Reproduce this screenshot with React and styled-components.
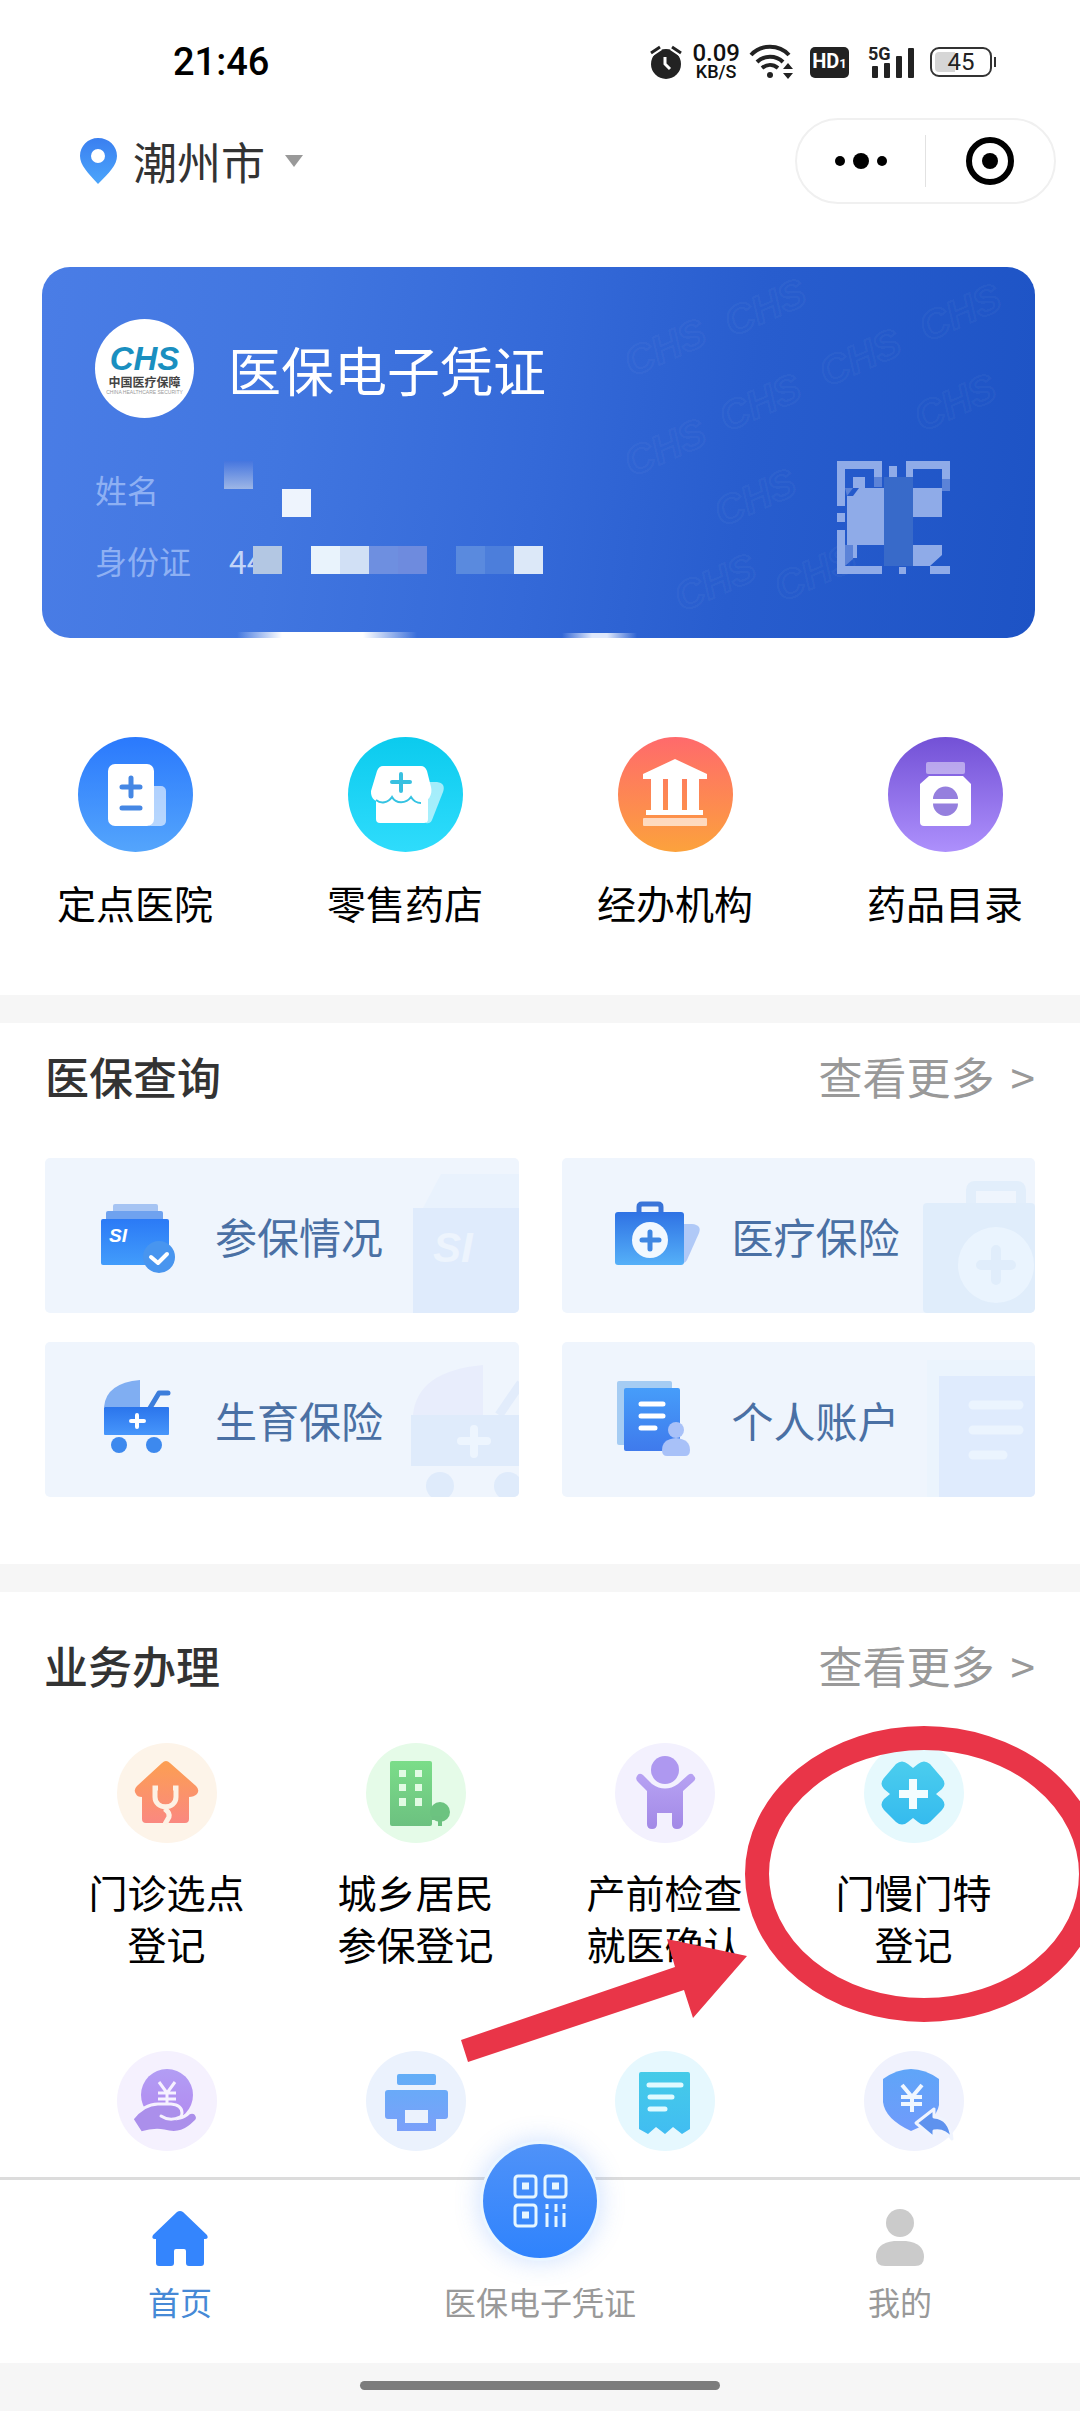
import React from 'react'
import styled, { createGlobalStyle } from 'styled-components';

const GlobalStyle = createGlobalStyle`
*{
    box-sizing:border-box;
}
body{
    margin:0;
    background:#fff;
    color:#111;
    font-family:'Noto Sans CJK SC', sans-serif;
}
button{
    border:0;
    padding:0;
    background:none;
    font:inherit;
    color:inherit;
    cursor:pointer;
}
a{
    color:inherit;
    text-decoration:none;
}
svg{
    display:block;
    flex:none;
    overflow:visible;
}
`;

const Gradient = ({ id, from, to }) => (
    <defs>
        <linearGradient id={id} x1="0" y1="0" x2="0" y2="1">
            <stop offset="0" stopColor={from} />
            <stop offset="1" stopColor={to} />
        </linearGradient>
    </defs>
)

/* status bar */

const AlarmIcon = () => (
    <svg width="32" height="34" viewBox="0 0 32 34" aria-hidden="true">
        <circle cx="15" cy="19" r="15" fill="#222" />
        <path d="M0 8l9-6M30 8l-9-6" stroke="#fff" strokeWidth="7" />
        <path d="M0 8l9-6M30 8l-9-6" stroke="#222" strokeWidth="3" />
        <path d="M14 12v7l5 5" stroke="#fff" strokeWidth="3" fill="none" />
    </svg>
)

const WifiIcon = () => (
    <svg width="46" height="34" viewBox="0 0 46 34" aria-hidden="true">
        <g fill="none" stroke="#222" strokeWidth="4">
            <path d="M2 10C12-1 30-1 40 10" />
            <path d="M8 17c7-7 19-7 26 0" />
            <path d="M13 23c5-4 11-4 16 0" />
        </g>
        <circle cx="21" cy="30" r="3" fill="#222" />
        <path d="M34 24l5-6 5 6zM34 28l5 6 5-6z" fill="#222" />
    </svg>
)

const SignalIcon = () => (
    <svg width="48" height="34" viewBox="0 0 48 34" aria-hidden="true">
        <text x="0" y="15" fontSize="18" fontWeight="700" fontFamily="Roboto, sans-serif" fill="#222">5G</text>
        <g fill="#222">
            <rect x="4" y="21" width="6" height="12" rx="1" />
            <rect x="16" y="18" width="6" height="15" rx="1" />
            <rect x="28" y="11" width="6" height="22" rx="1" />
            <rect x="40" y="3" width="6" height="30" rx="1" />
        </g>
    </svg>
)

/* round shortcuts under the card */

const HospitalIcon = () => (
    <svg width="115" height="115" viewBox="0 0 115 115" aria-hidden="true">
        <Gradient id="hospital" from="#2a79fd" to="#54a5fc" />
        <circle cx="57.5" cy="57.5" r="57.5" fill="url(#hospital)" />
        <rect x="68" y="49" width="20" height="40" rx="5" fill="#fff" opacity=".6" />
        <rect x="30" y="27" width="46" height="62" rx="7" fill="#fff" />
        <path d="M53 41v18M44 50h18M44 71h18" stroke="#4587e4" strokeWidth="5" strokeLinecap="round" />
    </svg>
)

const PharmacyIcon = () => (
    <svg width="115" height="115" viewBox="0 0 115 115" aria-hidden="true">
        <Gradient id="pharmacy" from="#0bcbee" to="#2fdcfc" />
        <circle cx="57.5" cy="57.5" r="57.5" fill="url(#pharmacy)" />
        <path d="M78 45h11q9 1 6 10L84 83q-2 4-6 3z" fill="#fff" opacity=".6" />
        <path d="M28 62h52v20q0 4-4 4H32q-4 0-4-4z" fill="#fff" />
        <path d="M35 29h38q4 0 6 5l4 16c2 8-3 15-10 16-5 0-8-2-10-5-5 7-15 7-19 0-4 7-22 7-21-7l6-20q2-5 6-5z" fill="#fff" />
        <path d="M28 63c5 4 12 3 16-3 4 7 14 7 19 0 3 5 6 6 10 6" fill="none" stroke="#35c3e2" strokeWidth="2" />
        <path d="M53 37v17M44 45h18" stroke="#38c0e0" strokeWidth="4" strokeLinecap="round" />
    </svg>
)

const AgencyIcon = () => (
    <svg width="115" height="115" viewBox="0 0 115 115" aria-hidden="true">
        <Gradient id="agency" from="#ff6a6c" to="#fca23c" />
        <circle cx="57.5" cy="57.5" r="57.5" fill="url(#agency)" />
        <path d="M57 22l32 15v5h-8v31h4v5H28v-5h5V42h-8v-5zM45 42v31h5V42zM64 42v31h5V42z" fill="#fff" fillRule="evenodd" />
        <rect x="25" y="81" width="64" height="8" rx="1" fill="#fff" opacity=".65" />
    </svg>
)

const MedicineIcon = () => (
    <svg width="115" height="115" viewBox="0 0 115 115" aria-hidden="true">
        <Gradient id="medicine" from="#7351d6" to="#ad90fc" />
        <circle cx="57.5" cy="57.5" r="57.5" fill="url(#medicine)" />
        <rect x="38" y="25" width="39" height="12" rx="2" fill="#fff" opacity=".45" />
        <path d="M41 39h34l8 8v38q0 4-4 4H36q-4 0-4-4V47z" fill="#fff" />
        <path d="M45 62a12.500 12.500 0 0 1 25 0zM45 66.500a12.500 12.500 0 0 0 25 0z" fill="#957fde" />
    </svg>
)

/* query tiles: a small icon and a pale enlarged one behind it */

const InsuredIcon = () => (
    <svg width="90" height="84" viewBox="0 0 90 84" aria-hidden="true">
        <Gradient id="insured" from="#2b7af6" to="#429cfb" />
        <rect x="18" y="10" width="45" height="10" rx="2" fill="#a6c4f3" />
        <rect x="11" y="17" width="57" height="10" rx="2" fill="#6fa2ef" />
        <rect x="6" y="25" width="68" height="46" rx="2" fill="url(#insured)" />
        <text x="14" y="48" fontSize="19" fontWeight="700" fontStyle="italic" fontFamily="'Liberation Sans', sans-serif" fill="#fff">SI</text>
        <circle cx="64" cy="63" r="16" fill="#4895ef" />
        <path d="M56 63l7 6 9-9" fill="none" stroke="#fff" strokeWidth="4" strokeLinecap="round" strokeLinejoin="round" />
    </svg>
)

const KitIcon = () => (
    <svg width="90" height="84" viewBox="0 0 90 84" aria-hidden="true">
        <Gradient id="kit" from="#2f72e4" to="#55b0f8" />
        <path d="M70 30h10q10 1 7 9L75 66q-2 4-5 3z" fill="#b0c9f7" />
        <path d="M27 20v-7q0-3 3-3h16q3 0 3 3v7" fill="none" stroke="#3a74d8" strokeWidth="5" />
        <rect x="3" y="18" width="69" height="53" rx="3" fill="url(#kit)" />
        <circle cx="38" cy="46" r="18" fill="#f1f8ff" />
        <path d="M38 38v17M30 46h17" stroke="#3f87e2" strokeWidth="5" strokeLinecap="round" />
    </svg>
)

const PramIcon = () => (
    <svg width="90" height="84" viewBox="0 0 90 84" aria-hidden="true">
        <Gradient id="pram" from="#2b75ec" to="#4796fb" />
        <path d="M9 29Q11 5 45 2v27z" fill="#80aef2" />
        <path d="M55 30l9-15h9" fill="none" stroke="#3c7ddb" strokeWidth="5" strokeLinecap="round" strokeLinejoin="round" />
        <rect x="9" y="29" width="65" height="28" rx="1" fill="url(#pram)" />
        <path d="M42 37v12M36 43h13" stroke="#fff" strokeWidth="4" strokeLinecap="round" />
        <circle cx="24" cy="67" r="8" fill="#3d89ee" />
        <circle cx="59" cy="67" r="8" fill="#3d89ee" />
    </svg>
)

const AccountIcon = () => (
    <svg width="90" height="84" viewBox="0 0 90 84" aria-hidden="true">
        <Gradient id="account" from="#469dfa" to="#3f7aec" />
        <rect x="5" y="3" width="55" height="64" rx="2" fill="#a5ccf3" />
        <rect x="12" y="10" width="56" height="63" rx="2" fill="url(#account)" />
        <path d="M29 26h22M29 38h22M29 50h14" stroke="#fff" strokeWidth="5" strokeLinecap="round" />
        <circle cx="64" cy="52" r="8" fill="#a8c1f8" />
        <path d="M50 72q0-11 14-12 14 1 14 12 0 6-5 6H55q-5 0-5-6z" fill="#a8c1f8" />
    </svg>
)

const InsuredMark = () => (
    <svg width="120" height="155" viewBox="0 0 120 155" aria-hidden="true">
        <path d="M24 50l18-34h78v34z" fill="#e9f2fd" />
        <rect x="14" y="50" width="106" height="105" fill="#dfebfc" />
        <text x="34" y="104" fontSize="42" fontWeight="700" fontStyle="italic" fontFamily="'Liberation Sans', sans-serif" fill="#edf4fd">SI</text>
    </svg>
)

const KitMark = () => (
    <svg width="120" height="155" viewBox="0 0 120 155" aria-hidden="true">
        <path d="M56 46V32q0-4 4-4h42q4 0 4 4v14" fill="none" stroke="#e2eefb" strokeWidth="10" />
        <rect x="8" y="45" width="112" height="110" rx="4" fill="#e0edfb" />
        <circle cx="81" cy="107" r="38" fill="#eaf4fe" />
        <path d="M81 92v30M66 107h30" stroke="#e0edfb" strokeWidth="10" strokeLinecap="round" />
    </svg>
)

const PramMark = () => (
    <svg width="120" height="155" viewBox="0 0 120 155" aria-hidden="true">
        <path d="M14 73q4-44 70-50v50z" fill="#e8edfc" />
        <path d="M100 73l22-32" stroke="#e2ecfb" strokeWidth="9" />
        <rect x="12" y="73" width="108" height="51" fill="#dfebfb" />
        <path d="M75 87v25M62 99h26" stroke="#edf5fe" strokeWidth="8" strokeLinecap="round" />
        <circle cx="41" cy="144" r="14" fill="#dfebfb" />
        <circle cx="109" cy="144" r="14" fill="#dfebfb" />
    </svg>
)

const AccountMark = () => (
    <svg width="120" height="155" viewBox="0 0 120 155" aria-hidden="true">
        <rect x="12" y="18" width="108" height="137" fill="#ebf4fd" />
        <rect x="24" y="34" width="96" height="121" fill="#dfebfd" />
        <path d="M58 63h46M58 88h46M58 113h30" stroke="#ebf4fe" strokeWidth="9" strokeLinecap="round" />
    </svg>
)

/* business icons */

const ClinicIcon = () => (
    <svg width="100" height="100" viewBox="0 0 100 100" aria-hidden="true">
        <Gradient id="clinic" from="#fc9f52" to="#fa8880" />
        <circle cx="50" cy="50" r="50" fill="#fdf4e9" />
        <path d="M45 20q4-4 8 0l26 23q4 4 1 8-3 3-8 3v22q0 4-4 4H29q-4 0-4-4V54q-5 0-6-3-3-4 1-8z" fill="url(#clinic)" />
        <path d="M41 45h-3v9c0 13 21 13 21 0v-9h-3M49 64v3q4 3 3 7l-4 7" fill="none" stroke="#fdf1e4" strokeWidth="5" />
    </svg>
)

const ResidentIcon = () => (
    <svg width="100" height="100" viewBox="0 0 100 100" aria-hidden="true">
        <Gradient id="resident" from="#7bdd89" to="#6cc180" />
        <circle cx="50" cy="50" r="50" fill="#e5fbe8" />
        <rect x="24" y="18" width="42" height="65" rx="2" fill="url(#resident)" />
        <circle cx="74" cy="69" r="10" fill="#6cc380" />
        <path d="M66 75h8v8M74 76v7" stroke="#6cc180" strokeWidth="4" fill="none" />
        <path d="M33 27h7v7h-7zM49 27h7v7h-7zM33 41h7v7h-7zM49 41h7v7h-7zM33 55h7v8h-7zM49 55h7v8h-7z" fill="#e2fbe4" />
    </svg>
)

const PrenatalIcon = () => (
    <svg width="100" height="100" viewBox="0 0 100 100" aria-hidden="true">
        <Gradient id="prenatal" from="#b7a2f3" to="#a289e6" />
        <circle cx="50" cy="50" r="50" fill="#f3f1fe" />
        <path d="M28 32q-4-3-6 1-2 3 1 6l9 9v33q0 5 5 5t5-5V70h15v11q0 5 5 5t6-5V48l10-9q4-3 1-6-2-4-6-1L63 41q-13 9-26 0z" fill="url(#prenatal)" />
        <circle cx="50" cy="28" r="17" fill="#f3f1fe" />
        <circle cx="50" cy="27" r="14" fill="#ae98f0" />
    </svg>
)

const ChronicIcon = () => (
    <svg width="100" height="100" viewBox="0 0 100 100" aria-hidden="true">
        <Gradient id="chronic" from="#4bcdee" to="#35bbee" />
        <circle cx="50" cy="50" r="50" fill="#e6f9fd" />
        <path d="M49 25l5-4q6-5 12 0l12 14q5 6 0 11l-6 5 6 5q5 6 0 11L66 79q-6 5-12 0l-5-4-5 4q-6 5-12 0L20 67q-5-5 0-11l6-5-6-5q-5-5 0-11l12-14q6-5 12 0z" fill="url(#chronic)" />
        <path d="M49 36v30M35 51h29" stroke="#f3fdff" strokeWidth="8" />
    </svg>
)

const SubsidyIcon = () => (
    <svg width="100" height="100" viewBox="0 0 100 100" aria-hidden="true">
        <Gradient id="subsidy" from="#b29df4" to="#b28af0" />
        <circle cx="50" cy="50" r="50" fill="#f5f1fe" />
        <circle cx="50" cy="44" r="26" fill="url(#subsidy)" />
        <path d="M42 31l8 11 8-11M41 42h18M41 48h18M50 42v12" fill="none" stroke="#f6f1ff" strokeWidth="3" />
        <path d="M15 68q12-15 26-15h13q11 1 11 9 0 3-2 5 5-1 9-5 4-2 7 1 3 4 0 7C69 80 61 84 47 80q-10-2-23 2z" fill="#ab8feb" stroke="#f5f1fe" strokeWidth="3" />
        <path d="M44 65q9 6 19 1" fill="none" stroke="#f5f1fe" strokeWidth="3" strokeLinecap="round" />
    </svg>
)

const PrintIcon = () => (
    <svg width="100" height="100" viewBox="0 0 100 100" aria-hidden="true">
        <Gradient id="print" from="#62aef7" to="#7ba0fa" />
        <circle cx="50" cy="50" r="50" fill="#ebf2fd" />
        <path d="M33 23h35q2 0 2 2v7q0 2-2 2H33q-2 0-2-2v-7q0-2 2-2zM22 39h57q3 0 3 3v23q0 3-3 3h-9v12H31V68h-9q-3 0-3-3V42q0-3 3-3zM39 59v13h23V59z" fill="url(#print)" fillRule="evenodd" />
    </svg>
)

const ReceiptIcon = () => (
    <svg width="100" height="100" viewBox="0 0 100 100" aria-hidden="true">
        <Gradient id="receipt" from="#45cbe8" to="#41bdf2" />
        <circle cx="50" cy="50" r="50" fill="#e6f8fe" />
        <path d="M26 21h47q2 0 2 2v55l-8 5-9-7-8 7-9-7-8 7-9-5V23q0-2 2-2z" fill="url(#receipt)" />
        <path d="M34 34h32M35 46h22M35 58h15" stroke="#dffaff" strokeWidth="5" strokeLinecap="round" />
    </svg>
)

const RefundIcon = () => (
    <svg width="100" height="100" viewBox="0 0 100 100" aria-hidden="true">
        <Gradient id="refund" from="#5fa5f8" to="#709bfb" />
        <circle cx="50" cy="50" r="50" fill="#f0f2fd" />
        <path d="M19 28Q47 8 75 28v26q-3 16-28 26-26-12-28-29z" fill="url(#refund)" />
        <path d="M38 34l10 12 10-12M37 46h21M37 53h21M48 46v15" fill="none" stroke="#f0f7ff" strokeWidth="4" />
        <path d="M52 72l18-14v8q16 1 18 22-8-10-18-8v7z" fill="#5e92ee" stroke="#f0f4fe" strokeWidth="3" strokeLinejoin="round" />
    </svg>
)

/* what is left of the personal code after it was masked */
const MaskedCode = () => (
    <svg width="113" height="113" viewBox="0 0 113 113" role="img" aria-label="二维码">
        <rect x="47" y="16" width="29" height="89" fill="#386ac9" />
        <g fill="#8fabe8">
            <path d="M0 0h45v16h-8V8H8v37H0zM0 69h8v36h37v8H0zM0 52h8v9H0z" />
            <path d="M16 16h12v11H16zM10 35h6l6-8h25v57H10zM16 84h4v13h-4z" />
            <path d="M52 5h8v11h-8zM69 0h44v18h-8V8H76v8h-7zM76 27h29v29H76z" />
            <path d="M76 84h29v10l-12 11H76zM93 105h20v8H93zM62 106h7v7h-7z" />
        </g>
        <path d="M37 16h8v10h-8zM8 84h8v14l-8 7zM105 18h8v12h-8zM8 27h8l-6 8z" fill="#5c83d8" />
    </svg>
)

const services = [
    { name: '定点医院', Icon: HospitalIcon },
    { name: '零售药店', Icon: PharmacyIcon },
    { name: '经办机构', Icon: AgencyIcon },
    { name: '药品目录', Icon: MedicineIcon },
]

const queries = [
    { name: '参保情况', Icon: InsuredIcon, Mark: InsuredMark },
    { name: '医疗保险', Icon: KitIcon, Mark: KitMark },
    { name: '生育保险', Icon: PramIcon, Mark: PramMark },
    { name: '个人账户', Icon: AccountIcon, Mark: AccountMark },
]

const business = [
    { lines: ['门诊选点', '登记'], Icon: ClinicIcon },
    { lines: ['城乡居民', '参保登记'], Icon: ResidentIcon },
    { lines: ['产前检查', '就医确认'], Icon: PrenatalIcon },
    { lines: ['门慢门特', '登记'], Icon: ChronicIcon },
    { Icon: SubsidyIcon },
    { Icon: PrintIcon },
    { Icon: ReceiptIcon },
    { Icon: RefundIcon },
]

const idMask = ['#b3c7e3', null, '#e9f3fc', '#d1e0f5', '#6e8fe0', '#6e8bde', null, '#5a8ade', '#4c7edb', '#dce8f8']

const watermarks = [
    [690, 70], [885, 75], [590, 110], [785, 120], [880, 165], [685, 165], [590, 210], [680, 260], [740, 335], [640, 345],
]

function StatusBar() {
    return (
        <StatusRow>
            <Clock>21:46</Clock>
            <StatusIcons>
                <AlarmIcon />
                <Speed>
                    <strong>0.09</strong>
                    <span>KB/S</span>
                </Speed>
                <WifiIcon />
                <HdBadge>HD<small>1</small></HdBadge>
                <SignalIcon />
                <Battery>45</Battery>
            </StatusIcons>
        </StatusRow>
    )
}

function TopBar() {
    return (
        <TopRow>
            <City type="button">
                <svg width="37" height="46" viewBox="0 0 37 46" aria-hidden="true">
                    <Gradient id="pin" from="#3a7ff0" to="#4ba5fb" />
                    <path d="M18 0C8 0 0 8 0 18c0 9 8 17 18 28 11-11 19-19 19-28C37 8 29 0 18 0zm0 11a7 7 0 1 1 0 14 7 7 0 0 1 0-14z" fill="url(#pin)" fillRule="evenodd" />
                </svg>
                <span>潮州市</span>
                <svg width="18" height="12" viewBox="0 0 18 12" aria-hidden="true">
                    <path d="M0 0h18l-9 12z" fill="#999" />
                </svg>
            </City>
            <Capsule>
                <button type="button" aria-label="更多">
                    <svg width="52" height="18" viewBox="0 0 52 18" aria-hidden="true">
                        <circle cx="5" cy="9" r="5" />
                        <circle cx="26" cy="9" r="8" />
                        <circle cx="47" cy="9" r="5" />
                    </svg>
                </button>
                <button type="button" aria-label="关闭">
                    <svg width="48" height="48" viewBox="0 0 48 48" aria-hidden="true">
                        <circle cx="24" cy="24" r="21" fill="none" stroke="#000" strokeWidth="6" />
                        <circle cx="24" cy="24" r="8" />
                    </svg>
                </button>
            </Capsule>
        </TopRow>
    )
}

function VoucherCard() {
    return (
        <Card>
            <CardPattern viewBox="0 0 993 371" preserveAspectRatio="xMaxYMid slice" aria-hidden="true">
                {watermarks.map(([x, y]) => (
                    <text key={`${x}-${y}`} x={x} y={y} transform={`rotate(-24 ${x} ${y})`}>CHS</text>
                ))}
            </CardPattern>
            <CardHead>
                <Logo>
                    <b>CHS</b>
                    <span>中国医疗保障</span>
                    <small>CHINA HEALTHCARE SECURITY</small>
                </Logo>
                <h1>医保电子凭证</h1>
            </CardHead>
            <CardBody>
                <Info>
                    <dt>姓名</dt>
                    <NameMask>
                        <Block $fill="linear-gradient(#4676df, #9db6e6)" />
                        <Block />
                        <Block $fill="#eef4fd" $low />
                    </NameMask>
                    <dt>身份证</dt>
                    <IdMask>
                        <span>44</span>
                        {idMask.map((fill, i) => <Block key={i} $fill={fill} />)}
                    </IdMask>
                </Info>
                <MaskedCode />
            </CardBody>
        </Card>
    )
}

function SectionHeader({ title }) {
    return (
        <Header>
            <h2>{title}</h2>
            <a href="#more">查看更多<span>&gt;</span></a>
        </Header>
    )
}

function TabBar() {
    return (
        <Tabs>
            <Tab href="#home" $active>
                <svg width="56" height="56" viewBox="0 0 56 56" aria-hidden="true">
                    <path d="M25 1q3-2 6 0l24 23q2 4-2 4h-1v24q0 3-3 3H37q-3 0-3-3V40q0-2-2-2h-8q-2 0-2 2v12q0 3-3 3H7q-3 0-3-3V28H3q-4 0-2-4z" fill="#3485fd" />
                </svg>
                首页
            </Tab>
            <Tab href="#voucher">
                <CodeButton>
                    <svg width="54" height="54" viewBox="0 0 54 54" fill="none" stroke="#e6f6ff" strokeWidth="3" aria-hidden="true">
                        <rect x="2" y="2" width="21" height="21" rx="3" />
                        <rect x="32" y="2" width="21" height="21" rx="3" />
                        <rect x="2" y="31" width="21" height="21" rx="3" />
                        <path d="M9 12h7M39 12h7M9 41h7" strokeWidth="7" />
                        <path d="M34 30v5M34 39v14M43 30v8M43 42v11M51 30v5M51 39v14" />
                    </svg>
                </CodeButton>
                医保电子凭证
            </Tab>
            <Tab href="#mine">
                <svg width="48" height="58" viewBox="0 0 48 58" fill="#cbcbcb" aria-hidden="true">
                    <circle cx="24" cy="14" r="14" />
                    <path d="M18 32h12q18 2 18 16 0 9-9 9H9q-9 0-9-9 0-14 18-16z" />
                </svg>
                我的
            </Tab>
        </Tabs>
    )
}

function App() {
    return (
        <Page>
            <GlobalStyle />
            <StatusBar />
            <TopBar />
            <VoucherCard />
            <Services>
                {services.map(({ name, Icon }) => (
                    <Service key={name} href="#service">
                        <Icon />
                        {name}
                    </Service>
                ))}
            </Services>
            <QuerySection>
                <SectionHeader title="医保查询" />
                <TileGrid>
                    {queries.map(({ name, Icon, Mark }) => (
                        <Tile key={name} href="#query">
                            <TileMark><Mark /></TileMark>
                            <Icon />
                            <span>{name}</span>
                        </Tile>
                    ))}
                </TileGrid>
            </QuerySection>
            <BusinessSection>
                <SectionHeader title="业务办理" />
                <BusinessGrid>
                    {business.map(({ lines, Icon }, i) => (
                        <BusinessItem key={i} href="#business">
                            <Icon />
                            {lines && <p>{lines[0]}<br />{lines[1]}</p>}
                        </BusinessItem>
                    ))}
                </BusinessGrid>
                <Highlight viewBox="0 0 1080 585" preserveAspectRatio="xMaxYMin meet" aria-hidden="true">
                    <ellipse cx="924" cy="282" rx="167" ry="136" fill="none" stroke="#e93548" strokeWidth="24" />
                    <path d="M461 448l214-73-8-28 80 17-54 62-9-28-216 72z" fill="#e93548" />
                </Highlight>
            </BusinessSection>
            <TabBar />
            <GestureArea><i /></GestureArea>
        </Page>
    )
}

const Page = styled.div`
display:flex;
flex-direction:column;
min-height:100vh;
overflow-x:hidden;
`;
const StatusRow = styled.div`
display:flex;
align-items:center;
justify-content:space-between;
padding:30px 83px 0 173px;
height:94px;
font-family:Roboto, sans-serif;
`;
const Clock = styled.time`
font-size:38px;
font-weight:500;
color:#000;
`;
const StatusIcons = styled.div`
display:flex;
align-items:center;
gap:9px;
`;
const Speed = styled.div`
display:flex;
flex-direction:column;
align-items:center;
color:#111;
strong{
    font-size:24px;
    line-height:20px;
    font-weight:500;
}
span{
    font-size:18px;
    line-height:18px;
    font-weight:500;
}
`;
const HdBadge = styled.span`
margin:0 10px 0 6px;
width:39px;
border-radius:5px;
background:#222;
color:#fff;
font-size:20px;
font-weight:700;
line-height:28px;
text-align:center;
small{
    font-size:13px;
}
`;
const Battery = styled.div`
position:relative;
margin:0 5px;
width:62px;
border:2px solid #333;
border-radius:9px;
background:linear-gradient(90deg, #d6d6d6 40%, #fff 40%);
background-clip:content-box;
padding:3px;
color:#222;
font-size:24px;
line-height:20px;
text-align:center;
&::after{
    content:'';
    position:absolute;
    right:-6px;
    top:8px;
    width:2px;
    height:10px;
    background:#333;
}
`;
const TopRow = styled.div`
display:flex;
align-items:center;
justify-content:space-between;
padding:24px 24px 0 80px;
`;
const City = styled.button`
display:flex;
align-items:center;
gap:16px;
font-size:44px;
line-height:52px;
color:#333;
svg:last-child{
    margin-left:4px;
}
`;
const Capsule = styled.div`
display:flex;
align-items:center;
width:261px;
height:86px;
border:2px solid #f0f0f0;
border-radius:43px;
button{
    flex:1;
    display:flex;
    align-items:center;
    justify-content:center;
    height:52px;
}
button + button{
    border-left:1px solid #e2e2e2;
}
`;
const Card = styled.section`
position:relative;
margin:63px 45px 0 42px;
padding:52px 85px 64px 53px;
border-radius:28px;
overflow:hidden;
color:#fff;
background:
    linear-gradient(90deg, transparent, #fff 25%, #fff 70%, transparent) 195px 100% / 180px 6px no-repeat,
    linear-gradient(90deg, transparent, #dfe8fb 40%, #dfe8fb 60%, transparent) 520px 100% / 75px 5px no-repeat,
    linear-gradient(97deg, #4a7de6 0%, #4176e0 25%, #3469d8 50%, #285dce 70%, #1d53c5 100%);
`;
const CardPattern = styled.svg`
position:absolute;
left:0;
top:0;
width:100%;
height:100%;
text{
    fill:none;
    stroke:#fff;
    stroke-opacity:0.05;
    stroke-width:2px;
    font:italic 700 40px 'Liberation Sans', sans-serif;
}
`;
const CardHead = styled.div`
position:relative;
display:flex;
align-items:center;
gap:34px;
h1{
    margin:0;
    font-size:53px;
    line-height:64px;
    font-weight:400;
}
`;
const Logo = styled.div`
display:flex;
flex-direction:column;
align-items:center;
justify-content:center;
width:99px;
height:99px;
border-radius:50%;
background:#fff;
white-space:nowrap;
b{
    font:italic 700 33px/32px 'Liberation Sans', sans-serif;
    color:#1a8fc0;
}
span{
    font-size:12px;
    line-height:14px;
    font-weight:700;
    color:#444;
}
small{
    font:5px/6px 'Liberation Sans', sans-serif;
    color:#999;
}
`;
const CardBody = styled.div`
position:relative;
display:flex;
justify-content:space-between;
margin-top:43px;
`;
const Info = styled.dl`
display:grid;
grid-template-columns:129px auto;
grid-template-rows:56px 28px;
row-gap:29px;
align-items:center;
margin:0;
dt{
    font-size:32px;
    line-height:28px;
    color:#8eb0f3;
}
dd{
    display:flex;
    margin:0;
}
`;
const NameMask = styled.dd`
height:56px;
`;
const IdMask = styled.dd`
span{
    width:29px;
    padding-left:5px;
    overflow:hidden;
    font-size:32px;
    line-height:28px;
    color:#c3d5f8;
}
`;
const Block = styled.i`
width:29px;
height:28px;
align-self:${({ $low }) => ($low ? 'flex-end' : 'flex-start')};
background:${({ $fill }) => $fill || 'none'};
`;
const Services = styled.nav`
display:grid;
grid-template-columns:repeat(4, 1fr);
padding:99px 0 67px;
`;
const Service = styled.a`
display:flex;
flex-direction:column;
align-items:center;
gap:24px;
font-size:39px;
line-height:52px;
color:#000;
`;
const Section = styled.section`
border-top:28px solid #f6f6f6;
`;
const QuerySection = styled(Section)`
padding:27px 45px 67px;
`;
const BusinessSection = styled(Section)`
position:relative;
padding:47px 42px 26px;
header{
    padding:0 3px 0 2px;
}
`;
const Header = styled.header`
display:flex;
align-items:center;
justify-content:space-between;
font-size:44px;
line-height:52px;
h2{
    margin:0;
    font-size:44px;
    font-weight:500;
    color:#333;
}
a{
    color:#999;
}
span{
    margin-left:16px;
}
`;
const TileGrid = styled.div`
display:grid;
grid-template-columns:1fr 1fr;
gap:29px 43px;
margin-top:56px;
`;
const Tile = styled.a`
position:relative;
display:flex;
align-items:center;
gap:30px;
height:155px;
padding-left:50px;
border-radius:5px;
overflow:hidden;
background:#eff5fd;
font-size:42px;
line-height:52px;
color:#4a70a4;
span{
    position:relative;
}
`;
const TileMark = styled.div`
position:absolute;
right:0;
top:0;
`;
const BusinessGrid = styled.div`
display:grid;
grid-template-columns:repeat(4, 1fr);
row-gap:82px;
margin-top:52px;
`;
const BusinessItem = styled.a`
display:flex;
flex-direction:column;
align-items:center;
gap:22px;
font-size:39px;
line-height:52px;
text-align:center;
color:#000;
p{
    margin:0;
}
`;
const Highlight = styled.svg`
position:absolute;
left:0;
top:0;
width:100%;
height:100%;
pointer-events:none;
`;
const Tabs = styled.nav`
position:relative;
display:grid;
grid-template-columns:repeat(3, 1fr);
align-items:end;
margin-top:auto;
padding-bottom:42px;
border-top:3px solid #dcdcdc;
background:#fff;
`;
const Tab = styled.a`
display:flex;
flex-direction:column;
align-items:center;
gap:14px;
font-size:32px;
line-height:40px;
color:${({ $active }) => ($active ? '#4689d6' : '#999')};
`;
const CodeButton = styled.span`
display:flex;
align-items:center;
justify-content:center;
width:114px;
height:114px;
margin:-36px 0 9px;
border-radius:50%;
background:linear-gradient(#4f92f8, #2f83fd);
box-shadow:0 0 0 3px #eaf6ff, 0 0 24px 4px rgba(70, 140, 250, 0.25);
`;
const GestureArea = styled.div`
display:flex;
justify-content:center;
padding:18px 0 21px;
background:#f6f6f6;
i{
    width:33.333%;
    height:9px;
    border-radius:5px;
    background:#7c7c7c;
}
`;

export default App
